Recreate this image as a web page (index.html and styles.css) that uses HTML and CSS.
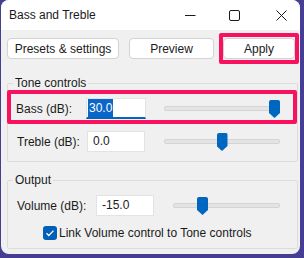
FILE: index.html
```html
<!DOCTYPE html>
<html>
<head>
    <title>Bass and Treble</title>
    <link rel="stylesheet" href="styles.css">
</head>
<body>
    <div class="window">
        <div class="titlebar">
            <span class="title">Bass and Treble</span>
            <svg class="cap cap-min" width="11" height="11" viewBox="0 0 11 11"><path d="M0 5.5H10.5" stroke="#1b1b1b" stroke-width="1"/></svg>
            <svg class="cap cap-max" width="11" height="11" viewBox="0 0 11 11"><rect x="0.5" y="0.5" width="10" height="10" rx="1.5" fill="none" stroke="#1b1b1b" stroke-width="1"/></svg>
            <svg class="cap cap-close" width="11" height="11" viewBox="0 0 11 11"><path d="M0.5 0.5L10.5 10.5M10.5 0.5L0.5 10.5" stroke="#1b1b1b" stroke-width="1"/></svg>
        </div>

        <div class="toolbar">
            <button class="btn btn-presets">Presets &amp; settings</button>
            <button class="btn btn-preview">Preview</button>
            <div class="mark mark-apply">
                <button class="btn btn-apply">Apply</button>
            </div>
        </div>

        <fieldset class="group group-tone">
            <legend>Tone controls</legend>
            <div class="mark mark-row">
                <div class="row row-bass">
                    <span class="label">Bass (dB):</span>
                    <div class="field field-focus"><span class="sel">30.0</span></div>
                    <div class="slider slider-tone">
                        <div class="track"></div>
                        <div class="thumb" style="--pos: 1"></div>
                    </div>
                </div>
            </div>
            <div class="row row-treble">
                <span class="label">Treble (dB):</span>
                <div class="field">0.0</div>
                <div class="slider slider-tone">
                    <div class="track"></div>
                    <div class="thumb" style="--pos: 0.5"></div>
                </div>
            </div>
        </fieldset>

        <fieldset class="group group-output">
            <legend>Output</legend>
            <div class="row row-volume">
                <span class="label label-wide">Volume (dB):</span>
                <div class="field">-15.0</div>
                <div class="slider slider-volume">
                    <div class="track"></div>
                    <div class="thumb" style="--pos: 0.25"></div>
                </div>
            </div>
            <div class="check-row">
                <span class="checkbox">
                    <svg width="14" height="14" viewBox="0 0 14 14"><path d="M3.5 7.2L5.8 9.5L10.5 4.6" fill="none" stroke="#fff" stroke-width="1.3"/></svg>
                </span>
                <span class="check-label">Link Volume control to Tone controls</span>
            </div>
        </fieldset>
    </div>
</body>
</html>
```

FILE: styles.css
```css
html, body { margin: 0; padding: 0; }
body { background: #463e93; width: 304px; height: 258px; overflow: hidden; padding-left: 1px; box-sizing: border-box; font-family: "Liberation Sans", Arial, sans-serif; font-size: 12px; color: #1a1a1a; }

.window { width: 299px; height: 254px; background: #f0f0f0; border-radius: 8px; overflow: hidden; }

.titlebar { height: 30px; background: #fff; display: flex; align-items: center; }
.title { margin-left: 8px; flex: 1; }
.cap { display: block; }
.cap-max { margin-left: 33px; }
.cap-close { margin-left: 36px; margin-right: 13px; }

.toolbar { display: flex; align-items: center; padding: 3px 0 0 6px; }
.btn { font: inherit; color: #1a1a1a; background: #fff; border: 1px solid #d3d3d3; border-radius: 4px; height: 21px; padding: 0; }
.btn-presets { width: 112px; }
.btn-preview { width: 85px; margin-left: 10px; }
.btn-apply { width: 72px; display: block; }

/* pink highlight boxes */
.mark { border: 4px solid #f7115f; border-radius: 2px; }
.mark-apply { margin-left: 5px; width: 72px; padding: 1px 0 0 0; height: 22px; }
.mark-row { margin-left: -1px; width: 290px; box-sizing: border-box; height: 34px; }

.group { border: 1px solid #dcdcdc; border-radius: 2px; margin: 12px 0 0 6px; padding: 0; width: 291px; box-sizing: border-box; }
.group legend { margin-left: 5px; padding: 0 2px; line-height: 14px; }
.group-tone { padding-bottom: 9px; }
.group-output { margin-top: 11px; padding-bottom: 8px; }

.row { display: flex; align-items: center; }
.row-bass { padding: 4px 0 0 5px; }
.row-treble { margin-top: 7px; padding-left: 9px; }
.row-volume { margin-top: 8px; padding-left: 9px; }

.label { width: 70px; }
.label-wide { width: 79px; }

.field { background: #fff; border: 1px solid #e3e3e3; box-sizing: border-box; width: 58px; height: 21px; line-height: 19px; padding-left: 5px; }
.field-focus { width: 60px; padding-left: 1px; border-bottom: 2px solid #0067c0; line-height: 18px; }
.sel { background: #0a66c8; color: #fff; padding: 2px 1px; }

.slider { position: relative; height: 21px; display: flex; align-items: center; }
.slider-tone { width: 116px; margin-left: 18px; }
.row-treble .slider-tone { margin-left: 19px; }
.slider-volume { width: 107px; margin-left: 19px; }
.track { width: 100%; height: 3px; background: #e4e4e4; border: 1px solid #d4d4d4; border-radius: 2px; }
.thumb { position: absolute; top: 2px; left: calc(var(--pos) * (100% - 11px)); width: 11px; height: 18px; background: #0067c0; border-radius: 2px 2px 0 0; clip-path: polygon(0 0, 100% 0, 100% 72%, 50% 100%, 0 72%); }

.check-row { display: flex; align-items: center; margin-top: 10px; padding-left: 35px; }
.checkbox { width: 14px; height: 14px; background: #005fb8; border-radius: 3px; display: block; }
.checkbox svg { display: block; }
.check-label { margin-left: 2px; }
```
